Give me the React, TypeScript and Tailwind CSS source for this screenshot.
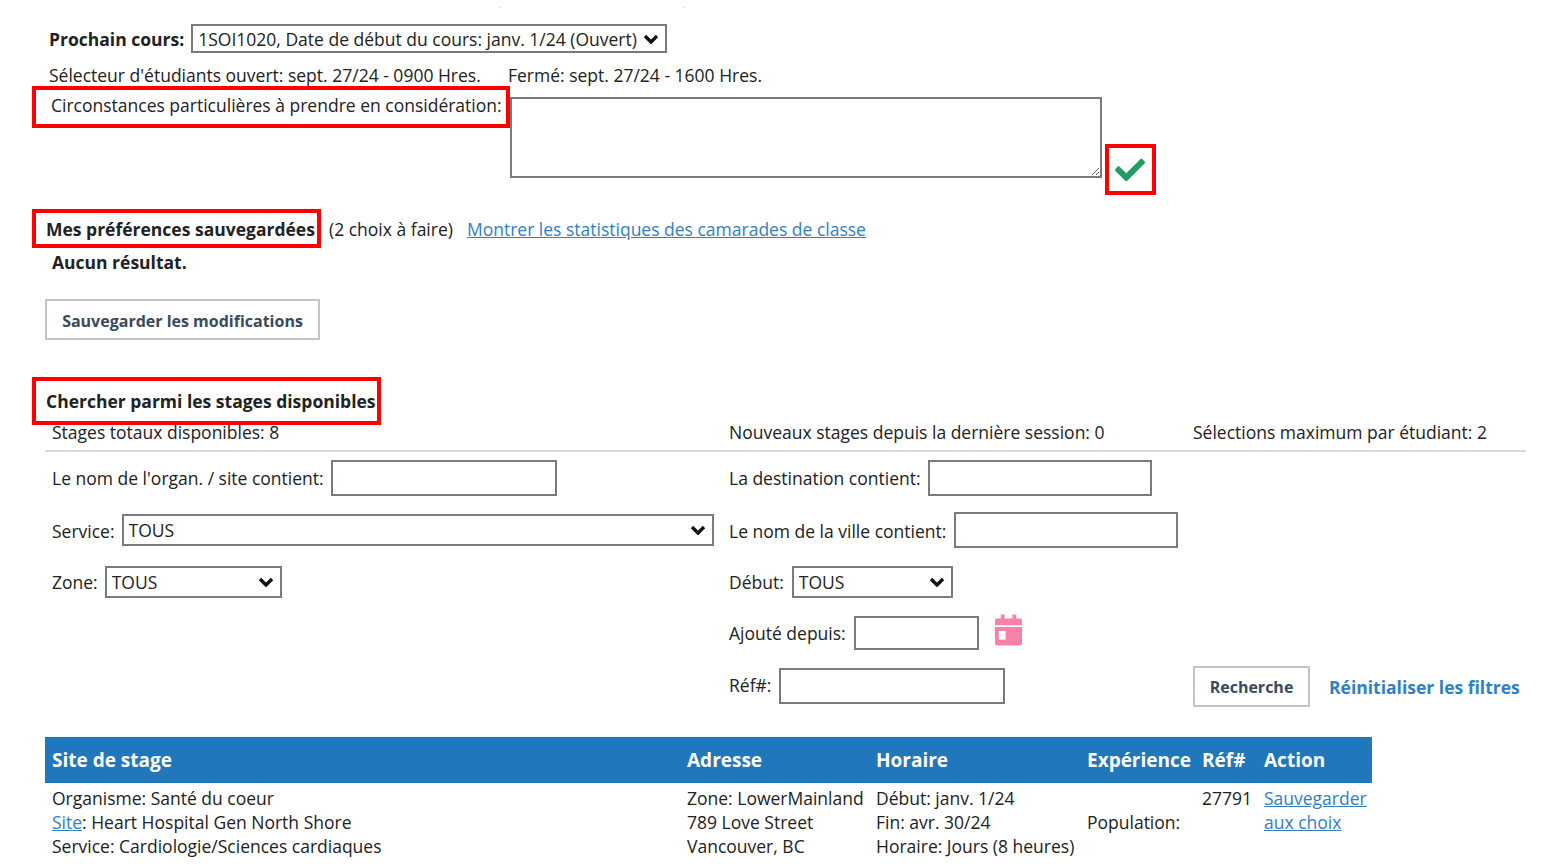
import type { ReactNode } from 'react';
import { FaCheck } from 'react-icons/fa';

// Chevron drawn over a native select whose own arrow is turned off
function Dropdown({ value, className }: { value: string; className: string }) {
  return (
    <div className={`relative ${className}`}>
      <select
        defaultValue={value}
        className="h-full w-full appearance-none border-2 border-[#7b7b7b] bg-white pl-[5px] text-[17.5px] text-[#222] outline-none"
      >
        <option>{value}</option>
      </select>
      <svg
        viewBox="0 0 16 10"
        aria-hidden
        className="pointer-events-none absolute right-[8px] top-1/2 h-[10px] w-[16px] -translate-y-1/2"
      >
        <path d="M2 2l6 6 6-6" fill="none" stroke="#111" strokeWidth="3.4" />
      </svg>
    </div>
  );
}

function TextBox({ className }: { className: string }) {
  return <input type="text" className={`border-2 border-[#7b7b7b] bg-white ${className}`} />;
}

function FormRow({ className, children }: { className: string; children: ReactNode }) {
  return <div className={`flex items-center ${className}`}>{children}</div>;
}

function CalendarIcon() {
  return (
    <svg viewBox="0 0 28 32" aria-hidden className="ml-[16px] h-[32px] w-[27px] -translate-y-[3px]">
      <path
        fill="#fb80a8"
        d="M6 0h4v4h8V0h4v4h4a2 2 0 0 1 2 2v5H0V6a2 2 0 0 1 2-2h4zM0 13h28v17a2 2 0 0 1-2 2H2a2 2 0 0 1-2-2z"
      />
      <rect x="4" y="17" width="7" height="9" fill="#fff" />
    </svg>
  );
}

export default function App() {
  return (
    <div className="h-[866px] overflow-hidden bg-white pl-[32px] font-['Open_Sans',sans-serif] text-[17.5px] leading-[24px] text-[#222]">
      {/* restes de la capture en haut de page */}
      <div className="flex h-[1px] translate-y-[7px]">
        <span className="ml-[468px] w-[1px] bg-[#cfcfcf]" />
        <span className="ml-[182px] w-[1px] bg-[#cfcfcf]" />
      </div>

      {/* Prochain cours */}
      <div className="flex items-center pl-[17px] pt-[23px]">
        <span className="font-bold">Prochain cours:</span>
        <Dropdown
          value="1SOI1020, Date de début du cours: janv. 1/24 (Ouvert)"
          className="ml-[7px] h-[29px] w-[476px]"
        />
      </div>
      <div className="mt-[10px] flex pl-[17px]">
        <span className="w-[459px]">Sélecteur d'étudiants ouvert: sept. 27/24 - 0900 Hres.</span>
        <span>Fermé: sept. 27/24 - 1600 Hres.</span>
      </div>

      {/* Circonstances */}
      <div className="-mt-[1px] flex h-[109px] items-start">
        <div className="flex h-[42px] w-[478px] items-center border-4 border-[#ff0000] pb-[4px] pl-[15px]">
          Circonstances particulières à prendre en considération:
        </div>
        <textarea className="mt-[11px] h-[81px] w-[592px] border-2 border-[#7b7b7b] bg-white" />
        <div className="ml-[3px] mt-[58px] flex h-[51px] w-[51px] items-center justify-center border-4 border-[#ff0000] pr-[2px]">
          <FaCheck className="h-[30px] w-[30px] text-[#1f9d62]" />
        </div>
      </div>

      {/* Mes préférences */}
      <div className="mt-[14px] flex items-center">
        <div className="flex h-[39px] w-[289px] items-center border-4 border-[#ff0000] pl-[10px] font-bold">
          Mes préférences sauvegardées
        </div>
        <span className="ml-[8px]">(2 choix à faire)</span>
        <a href="#" className="ml-[14px] text-[#2f80c4] underline">
          Montrer les statistiques des camarades de classe
        </a>
      </div>
      <p className="mt-[2px] pl-[20px] font-bold">Aucun résultat.</p>
      <button
        type="button"
        className="ml-[13px] mt-[25px] block h-[41px] w-[275px] border-2 border-[#c4c4c4] bg-white pt-[2px] text-[16px] font-bold text-[#3a4a5a]"
      >
        Sauvegarder les modifications
      </button>

      {/* Chercher */}
      <div className="mt-[37px] flex h-[48px] w-[349px] items-center border-4 border-[#ff0000] pl-[10px] font-bold">
        Chercher parmi les stages disponibles
      </div>
      <div className="ml-[13px] flex h-[27px] w-[1481px] items-start border-b-2 border-[#d9d9d9] pl-[7px] leading-[14px]">
        <span className="w-[677px]">Stages totaux disponibles: 8</span>
        <span className="w-[464px]">Nouveaux stages depuis la dernière session: 0</span>
        <span>Sélections maximum par étudiant: 2</span>
      </div>

      {/* Filtres */}
      <div className="flex pl-[20px] pt-[8px]">
        <div className="w-[677px]">
          <FormRow className="h-[36px]">
            <span>Le nom de l'organ. / site contient:</span>
            <TextBox className="ml-[7px] h-[36px] w-[226px]" />
          </FormRow>
          <FormRow className="mt-[18px] h-[32px]">
            <span className="pt-[2px]">Service:</span>
            <Dropdown value="TOUS" className="ml-[7px] h-[32px] w-[592px]" />
          </FormRow>
          <FormRow className="mt-[20px] h-[32px]">
            <span>Zone:</span>
            <Dropdown value="TOUS" className="ml-[7px] h-[32px] w-[177px]" />
          </FormRow>
        </div>
        <div className="flex-1">
          <FormRow className="h-[36px]">
            <span>La destination contient:</span>
            <TextBox className="ml-[7px] h-[36px] w-[224px]" />
          </FormRow>
          <FormRow className="mt-[16px] h-[36px]">
            <span className="pt-[2px]">Le nom de la ville contient:</span>
            <TextBox className="ml-[8px] h-[36px] w-[224px]" />
          </FormRow>
          <FormRow className="mt-[18px] h-[32px]">
            <span>Début:</span>
            <Dropdown value="TOUS" className="ml-[8px] h-[32px] w-[161px]" />
          </FormRow>
          <FormRow className="mt-[18px] h-[34px]">
            <span>Ajouté depuis:</span>
            <TextBox className="ml-[8px] h-[34px] w-[125px]" />
            <CalendarIcon />
          </FormRow>
          <FormRow className="mt-[16px] h-[41px]">
            <span className="-mt-[3px] w-[50px]">Réf#:</span>
            <TextBox className="-mt-[2px] h-[36px] w-[226px]" />
            <button
              type="button"
              className="ml-[188px] h-[41px] w-[117px] border-2 border-[#c4c4c4] bg-white text-[16px] font-bold text-[#3a4a5a]"
            >
              Recherche
            </button>
            <a href="#" className="ml-[19px] whitespace-nowrap font-bold text-[#2f80c4]">
              Réinitialiser les filtres
            </a>
          </FormRow>
        </div>
      </div>

      {/* Résultats */}
      <table className="ml-[13px] mt-[30px] w-[1327px] table-fixed border-collapse text-left">
        <colgroup>
          <col className="w-[635px]" />
          <col className="w-[189px]" />
          <col className="w-[211px]" />
          <col className="w-[115px]" />
          <col className="w-[62px]" />
          <col className="w-[115px]" />
        </colgroup>
        <thead>
          <tr className="h-[46px] bg-[#2077bb] text-[19px] font-bold text-white">
            <th className="pl-[7px]">Site de stage</th>
            <th className="pl-[7px]">Adresse</th>
            <th className="pl-[7px]">Horaire</th>
            <th className="pl-[7px]">Expérience</th>
            <th className="pl-[7px]">Réf#</th>
            <th className="pl-[7px]">Action</th>
          </tr>
        </thead>
        <tbody>
          <tr className="align-top">
            <td className="pl-[7px] pt-[3px]">
              Organisme: Santé du coeur
              <br />
              <a href="#" className="text-[#2f80c4] underline">
                Site
              </a>
              : Heart Hospital Gen North Shore
              <br />
              Service: Cardiologie/Sciences cardiaques
            </td>
            <td className="whitespace-nowrap pl-[7px] pt-[3px]">
              Zone: LowerMainland
              <br />
              789 Love Street
              <br />
              Vancouver, BC
            </td>
            <td className="whitespace-nowrap pl-[7px] pt-[3px]">
              Début: janv. 1/24
              <br />
              Fin: avr. 30/24
              <br />
              Horaire: Jours (8 heures)
            </td>
            <td className="pl-[7px] pt-[27px]">Population:</td>
            <td className="pl-[7px] pt-[3px]">27791</td>
            <td className="pl-[7px] pt-[3px]">
              <a href="#" className="text-[#2f80c4] underline">
                Sauvegarder aux choix
              </a>
            </td>
          </tr>
        </tbody>
      </table>
    </div>
  );
}
